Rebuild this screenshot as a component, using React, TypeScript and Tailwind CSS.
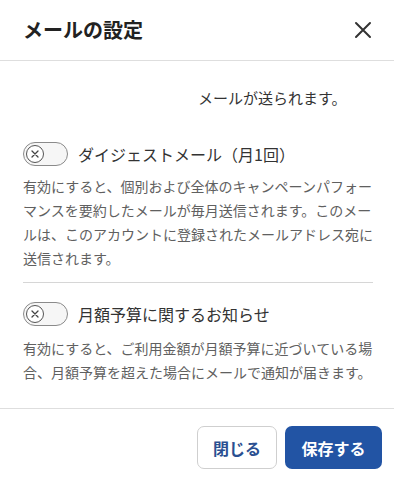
import React from "react";

function Toggle() {
  return (
    <div className="w-[45px] h-[24px] rounded-full border border-[#8a8a8a] bg-[#f6f6f6] flex items-center pl-[2px] shrink-0">
      <div className="w-[18px] h-[18px] rounded-full border border-[#555] bg-white flex items-center justify-center">
        <svg width="8" height="8" viewBox="0 0 8 8">
          <path d="M1 1L7 7M7 1L1 7" stroke="#444" strokeWidth="1.3" strokeLinecap="round" />
        </svg>
      </div>
    </div>
  );
}

export default function App() {
  return (
    <div
      className="w-[394px] h-[486px] bg-white flex flex-col"
      style={{ fontFamily: '"Noto Sans CJK JP", "Noto Sans", sans-serif' }}
    >
      <div className="h-[61px] border-b border-[#dedede] flex items-center justify-between pl-[23px] pr-[22px] shrink-0">
        <div className="text-[20px] font-bold text-[#222] leading-none">メールの設定</div>
        <svg width="18" height="18" viewBox="0 0 18 18">
          <path d="M2 2L16 16M16 2L2 16" stroke="#333" strokeWidth="2" strokeLinecap="round" />
        </svg>
      </div>
      <div className="pl-[23px] pr-[20px] flex flex-col flex-1">
        <div className="pt-[25px] pl-[175px] text-[15px] leading-[24px] text-[#333]">メールが送られます。</div>
        <div className="mt-[32px] flex items-center gap-[10px] h-[24px]">
          <Toggle />
          <div className="text-[16px] text-[#333] leading-none">ダイジェストメール（月1回）</div>
        </div>
        <p className="mt-[8px] text-[14px] leading-[24px] text-[#606060]">
          有効にすると、個別および全体のキャンペーンパフォーマンスを要約したメールが毎月送信されます。このメールは、このアカウントに登録されたメールアドレス宛に送信されます。
        </p>
        <div className="mt-[12px] mr-[1px] border-t border-[#d6d6d6]" />
        <div className="mt-[19px] flex items-center gap-[10px] h-[24px]">
          <Toggle />
          <div className="text-[16px] text-[#333] leading-none">月額予算に関するお知らせ</div>
        </div>
        <p className="mt-[10px] text-[14px] leading-[24px] text-[#606060]">
          有効にすると、ご利用金額が月額予算に近づいている場合、月額予算を超えた場合にメールで通知が届きます。
        </p>
      </div>
      <div className="h-[78px] border-t border-[#dedede] flex items-start justify-end gap-[8px] pt-[17px] pr-[12px] shrink-0">
        <button className="w-[80px] h-[43px] rounded-[7px] border border-[#cfcfcf] bg-white text-[#2a4f91] text-[16px] font-bold">
          閉じる
        </button>
        <button className="w-[97px] h-[43px] rounded-[7px] bg-[#2254a4] text-white text-[16px] font-bold">
          保存する
        </button>
      </div>
    </div>
  );
}
